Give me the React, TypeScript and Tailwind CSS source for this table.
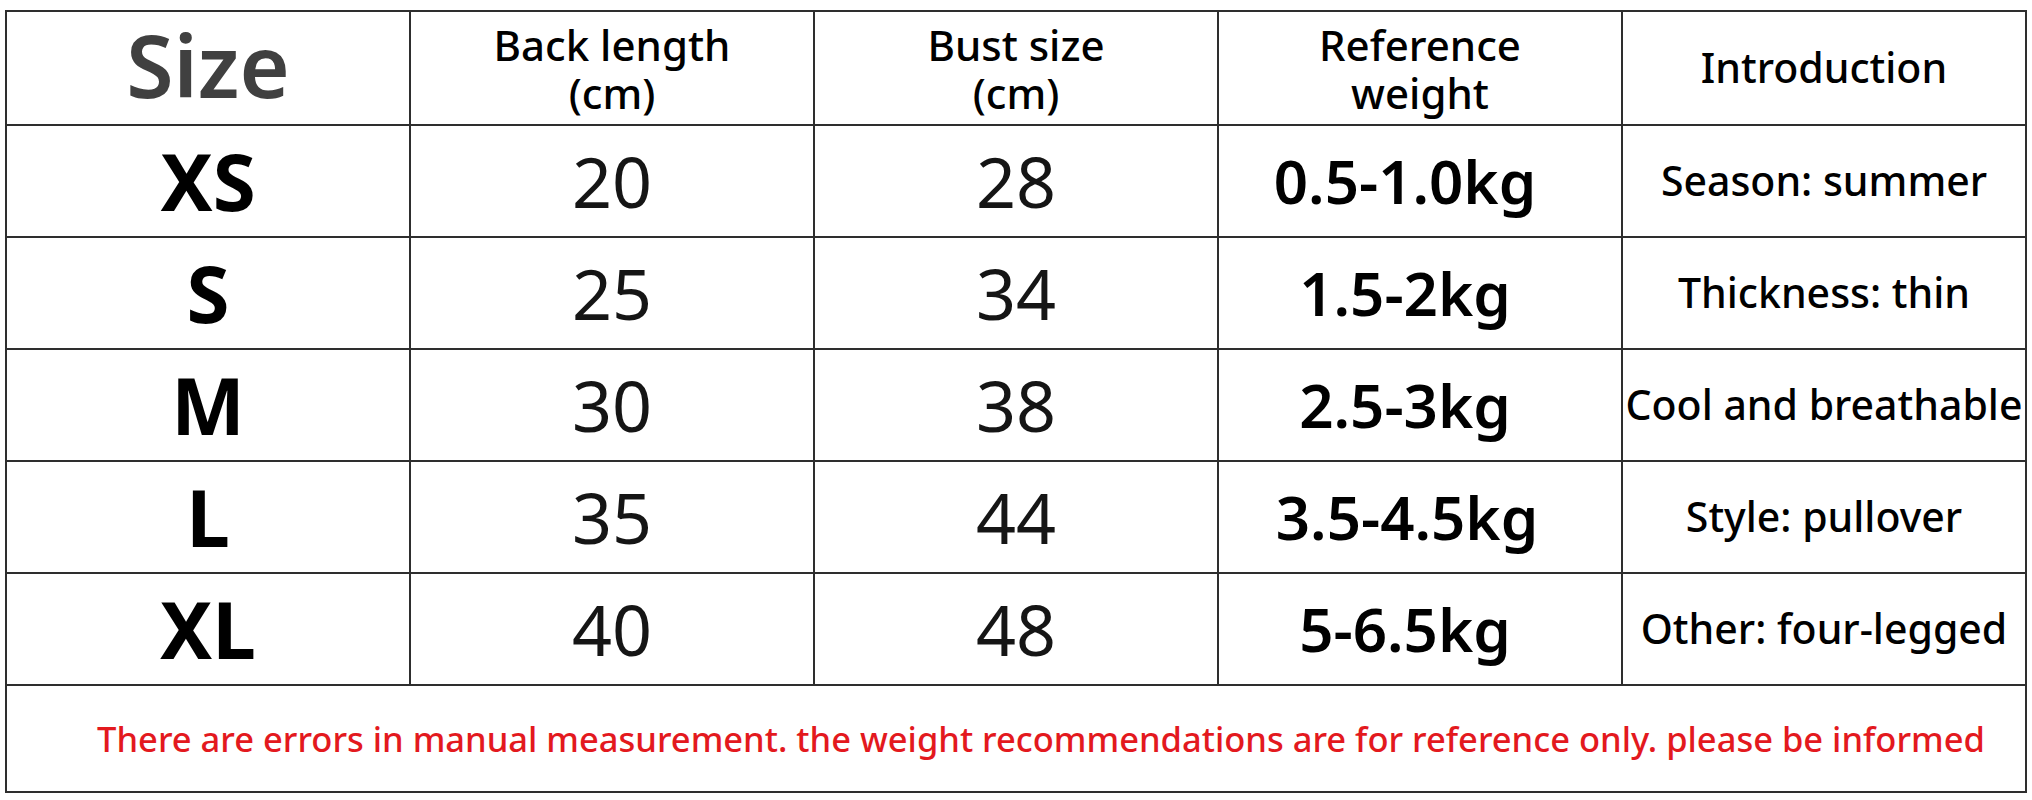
import type { FC } from 'react';

type Row = {
  size: string;
  back: string;
  bust: string;
  weight: string;
  intro: string;
  shift?: string;
};

const rows: Row[] = [
  { size: 'XS', back: '20', bust: '28', weight: '0.5-1.0kg', intro: 'Season: summer' },
  { size: 'S', back: '25', bust: '34', weight: '1.5-2kg', intro: 'Thickness: thin' },
  { size: 'M', back: '30', bust: '38', weight: '2.5-3kg', intro: 'Cool and breathable' },
  { size: 'L', back: '35', bust: '44', weight: '3.5-4.5kg', intro: 'Style: pullover', shift: 'pl-[4px]' },
  { size: 'XL', back: '40', bust: '48', weight: '5-6.5kg', intro: 'Other: four-legged' },
];

const font = { fontFamily: '"Noto Sans", "Open Sans", sans-serif' };

const cell = 'flex items-center justify-center border-l-2 border-[#2e2e2e]';

const HeaderCell: FC<{ lines: string[] }> = ({ lines }) => (
  <div className={`${cell} flex-col text-[42px] font-medium leading-[48px] text-black pt-[2px]`}>
    {lines.map((l) => (
      <span key={l}>{l}</span>
    ))}
  </div>
);

export default function App() {
  return (
    <div className="min-h-[800px] w-[2032px] bg-white pt-[10px] pl-[5px]" style={font}>
      <div className="w-[2022px] border-2 border-[#2e2e2e]">
        {/* header */}
        <div className="grid h-[112px] grid-cols-[402px_404px_404px_404px_404px]">
          <div className="flex items-center justify-center text-[86px] font-semibold leading-none text-[#404040] pb-[6px]">
            Size
          </div>
          <HeaderCell lines={['Back length', '(cm)']} />
          <HeaderCell lines={['Bust size', '(cm)']} />
          <HeaderCell lines={['Reference', 'weight']} />
          <div className={`${cell} text-[41px] font-medium text-black`}>Introduction</div>
        </div>

        {rows.map((r) => (
          <div
            key={r.size}
            className="grid h-[112px] grid-cols-[402px_404px_404px_404px_404px] border-t-2 border-[#2e2e2e]"
          >
            <div className="flex items-center justify-center text-[78px] font-bold leading-none text-black">
              {r.size}
            </div>
            <div className={`${cell} text-[70px] leading-none text-[#151515]`}>{r.back}</div>
            <div className={`${cell} text-[70px] leading-none text-[#151515]`}>{r.bust}</div>
            <div className={`${cell} pr-[30px] text-[60px] font-semibold leading-none text-black`}>
              <span className={r.shift}>{r.weight}</span>
            </div>
            <div className={`${cell} text-[41px] font-medium text-black whitespace-nowrap`}>{r.intro}</div>
          </div>
        ))}

        {/* footer note */}
        <div className="flex h-[107px] items-center justify-center border-t-2 border-[#2e2e2e] pl-[50px]">
          <p className="whitespace-nowrap text-[34.5px] font-medium text-[#e3191e]">
            There are errors in manual measurement. the weight recommendations are for reference only. please be
            informed
          </p>
        </div>
      </div>
    </div>
  );
}
